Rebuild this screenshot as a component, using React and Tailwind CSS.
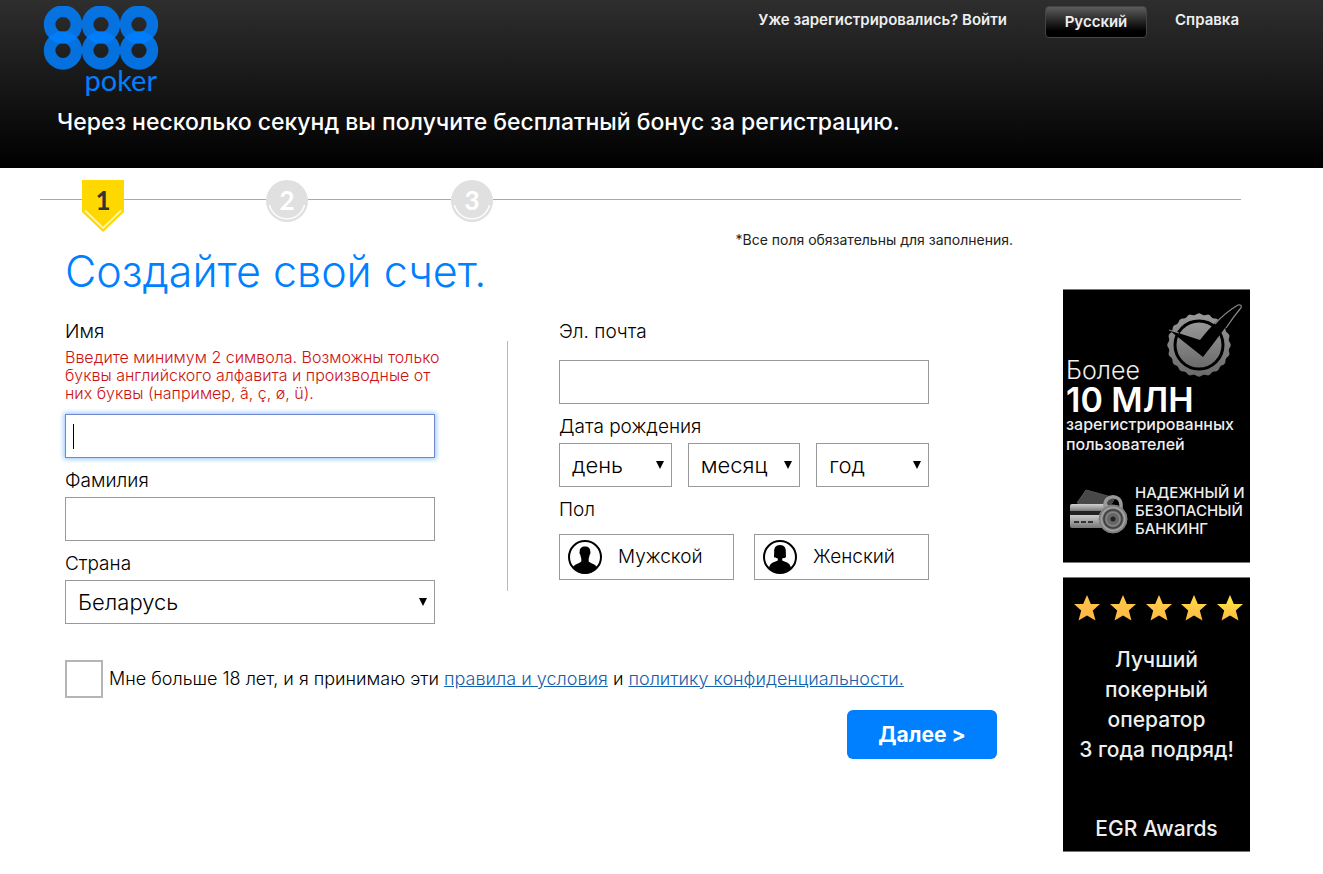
import React, { useState } from 'react'
import cn from 'clsx'

const Logo = () => (
  <a href="#" aria-label="888 poker" className="flex flex-col w-[116px] text-[#007fff]">
    <svg viewBox="0 0 116 64" className="block w-[116px] h-16" aria-hidden="true">
      {[20, 58, 96].map((x) => (
        <g key={x} fill="none" stroke="#007fff" strokeOpacity="0.86" strokeWidth="11.6">
          <circle cx={x} cy="18.5" r="13.4" />
          <circle cx={x} cy="44.5" r="13.4" />
        </g>
      ))}
    </svg>
    <span className="self-end pr-[2px] font-['Lato'] text-[29px] leading-5 font-normal">poker</span>
  </a>
)

const Header = () => (
  <header className="h-[168px] bg-linear-to-b/srgb from-[#2e2e2e] to-black text-white">
    <div className="flex flex-col max-w-[1250px] pl-[43px] pr-[11px] pt-[6px]">
      <div className="flex items-start justify-between">
        <Logo />
        <nav className="flex items-start text-[15px] leading-7 font-semibold text-[#eee]">
          <a href="#" className="mr-[38px]">Уже зарегистрировались? Войти</a>
          <button
            type="button"
            className="w-[102px] h-8 mr-7 rounded-sm border border-[#444] bg-linear-to-b/srgb from-[#5c5c5c] to-black to-80%"
          >
            Русский
          </button>
          <a href="#">Справка</a>
        </nav>
      </div>
      <p className="mt-4 ml-[14px] text-[23px] leading-8 font-medium">
        Через несколько секунд вы получите бесплатный бонус за регистрацию.
      </p>
    </div>
  </header>
)

const StepCircle = ({ children }) => (
  <li className="relative flex items-center justify-center size-[42px] rounded-full bg-[#e0e0e0] pb-[2px] font-['Lato'] text-[26px] font-bold text-white">
    <svg viewBox="0 0 42 42" className="absolute inset-0" fill="none" aria-hidden="true">
      <path d="M3.5 25 A18 18 0 0 0 38.500 25" stroke="#fff" strokeWidth="1.3" />
    </svg>
    {children}
  </li>
)

const Steps = () => (
  <ol className="flex items-start max-w-[1241px] h-16 pt-3 pl-10">
    <li role="presentation" className="w-[42px] h-px mt-[19px] bg-[#aaa]" />
    <li className="relative w-[42px] h-[52px] text-center font-['Lato'] text-[26px] leading-10 font-bold text-[#333]">
      <svg viewBox="0 0 42 52" className="absolute inset-0" aria-hidden="true">
        <path d="M0 0H42V32L21 52L0 32Z" fill="#ffd800" />
        <path d="M3 30.500L21 48L39 30.500" fill="none" stroke="#fff3b0" strokeWidth="1.8" />
      </svg>
      <span className="relative">1</span>
    </li>
    <li role="presentation" className="w-[142px] h-px mt-[19px] bg-[#aaa]" />
    <StepCircle>2</StepCircle>
    <li role="presentation" className="w-[143px] h-px mt-[19px] bg-[#aaa]" />
    <StepCircle>3</StepCircle>
    <li role="presentation" className="flex-1 h-px mt-[19px] bg-[#aaa]" />
  </ol>
)

const Label = ({ className, ...props }) => (
  <label className={cn('block text-[19px] leading-[26px]', className)} {...props} />
)

const TextInput = ({ className, ...props }) => (
  <input
    className={cn('block w-full h-11 px-2 border bg-white text-[22px] outline-none', className || 'border-[#999]')}
    {...props}
  />
)

const Select = ({ children, ...props }) => (
  <div className="relative">
    <select
      className="block w-full h-11 pl-3 pr-6 appearance-none border border-[#999] bg-white text-[22px] outline-none"
      {...props}
    >
      {children}
    </select>
    <svg viewBox="0 0 8 8" className="absolute right-2 top-[18px] size-2 pointer-events-none" aria-hidden="true">
      <path d="M0 0H8L4 8Z" />
    </svg>
  </div>
)

const MaleIcon = () => (
  <svg viewBox="0 0 34 34" className="size-[34px]" aria-hidden="true">
    <circle cx="17" cy="17" r="16" fill="#fff" stroke="#000" strokeWidth="2" />
    <path d="M17 6.500C13.500 6.500 11.600 8.500 11.700 11.500C11.300 12 11.600 14.500 12.400 15C12.700 17 13 18 13.300 18.500V21.500C10.500 24 7 24 5 27C8.500 32 13 33.500 17 33.500C21 33.500 25.500 32 29 27C27 24 23.500 24 20.700 21.500V18.500C21 18 21.300 17 21.600 15C22.400 14.500 22.700 12 22.300 11.500C22.400 8.500 20.500 6.500 17 6.500Z" />
  </svg>
)

const FemaleIcon = () => (
  <svg viewBox="0 0 34 34" className="size-[34px]" aria-hidden="true">
    <circle cx="17" cy="17" r="16" fill="#fff" stroke="#000" strokeWidth="2" />
    <path d="M17 5C12.500 5 11 8 11.200 12C11.300 15 10.500 16.500 11.500 17.500C12.500 18.300 14 18 14.800 18.500V20.500C12 22 7.500 22 6 27.500C9 32 13 33 17 33C21 33 25 32 28 27.500C26.500 22 22 22 19.200 20.500V18.500C20 18 21.500 18.300 22.500 17.500C23.500 16.500 22.700 15 22.800 12C23 8 21.500 5 17 5Z" />
  </svg>
)

const GenderOption = ({ value, icon, children }) => (
  <label className="flex items-center h-[46px] px-2 gap-4 border border-[#999] cursor-pointer text-[19px] has-checked:bg-[#e6f2ff]">
    <input type="radio" name="gender" value={value} className="sr-only" />
    {icon}
    {children}
  </label>
)

const SealIcon = () => {
  // scalloped edge of the seal
  const edge = Array.from({ length: 192 }, (_, i) => {
    const a = (i / 192) * Math.PI * 2
    const r = 31 + 0.8 * Math.cos(a * 20)
    return `${(34 + r * Math.cos(a)).toFixed(1)},${(41 + r * Math.sin(a)).toFixed(1)}`
  }).join(' ')

  return (
    <svg viewBox="0 0 78 78" className="size-[78px]" aria-hidden="true">
      <defs>
        <linearGradient id="seal" x1="0" y1="0" x2="0" y2="1">
          <stop offset="0" stopColor="#999" />
          <stop offset="1" stopColor="#6a6a6a" />
        </linearGradient>
      </defs>
      <polygon points={edge} fill="url(#seal)" />
      <circle cx="34" cy="41" r="24" fill="url(#seal)" stroke="#000" strokeWidth="3" />
      <path d="M4 26L35 36C46 22 60 8 73 1C77 0 77 3 75 5C62 20 51 37 38 53Z" fill="#000" />
      <path d="M50 20C58 11 66 5 73 1C77 0 77 3 75 5C70 11 65 18 61 24M4 26L14 29" fill="none" stroke="#888" strokeWidth="1.2" />
    </svg>
  )
}

const BankingIcon = () => (
  <svg viewBox="0 0 60 46" className="w-[60px] h-[46px] shrink-0" aria-hidden="true">
    <defs>
      <linearGradient id="card" x1="0" y1="0" x2="0" y2="1">
        <stop offset="0" stopColor="#d0d0d0" />
        <stop offset="0.3" stopColor="#777" />
        <stop offset="0.31" stopColor="#222" />
        <stop offset="0.45" stopColor="#222" />
        <stop offset="0.46" stopColor="#ccc" />
        <stop offset="1" stopColor="#777" />
      </linearGradient>
      <radialGradient id="lock">
        <stop offset="0" stopColor="#444" />
        <stop offset="0.5" stopColor="#888" />
        <stop offset="0.65" stopColor="#333" />
        <stop offset="0.8" stopColor="#aaa" />
        <stop offset="1" stopColor="#666" />
      </radialGradient>
    </defs>
    <path d="M8 15L17 2L46 10L40 20Z" fill="#484848" stroke="#555" />
    <rect x="1" y="16" width="38" height="24" rx="2" fill="url(#card)" />
    <path d="M5 34H10M12 34H17M19 34H24" stroke="#333" strokeWidth="2" />
    <path d="M36 26V17C36 6 52 6 52 17V26" fill="none" stroke="#999" strokeWidth="3.500" />
    <circle cx="44" cy="31" r="14" fill="url(#lock)" stroke="#888" />
    <circle cx="44" cy="31" r="6" fill="#666" />
    <circle cx="44" cy="31" r="2.500" fill="#222" />
  </svg>
)

const stars = ['#ffc34a', '#ffc94a', '#ffd24a', '#ffde45', '#ffec3f']

const Promo = () => (
  <aside className="flex flex-col gap-[14px] w-[187px] shrink-0 mt-[57px] text-[#eee]">
    <section className="flex flex-col h-[274px] px-[3px] pt-[14px] bg-black border-y border-[#777]">
      <div className="flex justify-end pr-1">
        <SealIcon />
      </div>
      <p className="-mt-[26px] text-[25px] leading-7 font-light">Более</p>
      <p className="text-[34px] leading-8 font-semibold text-white">10 МЛН</p>
      <p className="text-[16px] leading-5 font-medium whitespace-nowrap -mt-[2px]">
        зарегистрированных
        <br />
        пользователей
      </p>
      <div className="flex items-center gap-[6px] mt-[30px] pl-[3px]">
        <BankingIcon />
        <p className="text-[15px] leading-[18px] font-medium whitespace-nowrap">
          НАДЕЖНЫЙ И
          <br />
          БЕЗОПАСНЫЙ
          <br />
          БАНКИНГ
        </p>
      </div>
    </section>
    <section className="flex flex-col h-[275px] pt-4 bg-black border-y border-[#777] text-[21px] leading-[30px] font-medium text-center">
      <div className="flex justify-between pl-[10px] pr-[6px]">
        {stars.map((color, index) => (
          <svg key={color} viewBox="0 0 28 28" className="size-7" aria-hidden="true">
            <linearGradient id={`star${index}`} x1="0" y1="0" x2="0" y2="1">
              <stop offset="0" stopColor={color} />
              <stop offset="1" stopColor="#ffb845" />
            </linearGradient>
            <path d="M14 1L17.800 10H27L19.800 16.400L22.500 26.500L14 21.500L5.500 26.500L8.200 16.400L1 10H10.200Z" fill={`url(#star${index})`} />
          </svg>
        ))}
      </div>
      <p className="mt-[23px]">
        Лучший
        <br />
        покерный
        <br />
        оператор
        <br />
        3 года подряд!
      </p>
      <p className="mt-[49px]">EGR Awards</p>
    </section>
  </aside>
)

const SignupForm = () => {
  const [accepted, setAccepted] = useState(false)

  return (
    <form className="flex-1 min-w-0 pl-[65px]" onSubmit={(e) => e.preventDefault()}>
      <p className="pr-[50px] text-right text-[14px] leading-4 font-normal text-[#222]">*Все поля обязательны для заполнения.</p>
      <h1 className="text-[43px] leading-[46px] font-light text-[#007fff]">Создайте свой счет.</h1>

      <div className="flex mt-[25px]">
        <div className="w-[370px]">
          <Label htmlFor="firstName">Имя</Label>
          <p className="mt-[3px] mb-3 text-[16px] leading-[18px] text-[#cc1212] whitespace-nowrap">
            Введите минимум 2 символа. Возможны только
            <br />
            буквы английского алфавита и производные от
            <br />
            них буквы (например, ã, ç, ø, ü).
          </p>
          <div className="relative group">
            <TextInput
              id="firstName"
              type="text"
              className="border-[#7286cf] shadow-[0_0_5px_1px_#8cc4ff]"
            />
            <span className="absolute left-2 top-[10px] w-px h-[25px] bg-black group-focus-within:hidden" />
          </div>
          <Label htmlFor="lastName" className="mt-[10px] mb-[3px]">Фамилия</Label>
          <TextInput id="lastName" type="text" />
          <Label htmlFor="country" className="mt-[10px] mb-[3px]">Страна</Label>
          <Select id="country">
            <option>Беларусь</option>
          </Select>
        </div>

        <div className="w-px h-[250px] mt-[22px] ml-[72px] mr-[51px] bg-[#bbb]" />

        <div className="w-[370px]">
          <Label htmlFor="email">Эл. почта</Label>
          <div className="mt-[15px]">
            <TextInput id="email" type="email" />
          </div>
          <Label htmlFor="day" className="mt-[10px] mb-[3px]">Дата рождения</Label>
          <div className="grid grid-cols-3 gap-4">
            <Select id="day">
              <option>день</option>
            </Select>
            <Select aria-label="Месяц рождения">
              <option>месяц</option>
            </Select>
            <Select aria-label="Год рождения">
              <option>год</option>
            </Select>
          </div>
          <fieldset className="mt-[10px]">
            <legend className="mb-[11px] text-[19px] leading-[26px]">Пол</legend>
            <div className="grid grid-cols-2 gap-5">
              <GenderOption value="male" icon={<MaleIcon />}>Мужской</GenderOption>
              <GenderOption value="female" icon={<FemaleIcon />}>Женский</GenderOption>
            </div>
          </fieldset>
        </div>
      </div>

      <div className="flex items-center gap-[6px] mt-9">
        <input
          id="terms"
          type="checkbox"
          checked={accepted}
          onChange={() => setAccepted(!accepted)}
          className="size-[38px] shrink-0 appearance-none border-2 border-[#b5b5b5] bg-white checked:bg-[#007fff]"
        />
        <label htmlFor="terms" className="text-[18px] leading-6 whitespace-nowrap">
          Мне больше 18 лет, и я принимаю эти{' '}
          <a href="#" className="text-[#1560ad] underline">правила и условия</a> и{' '}
          <a href="#" className="text-[#1560ad] underline">политику конфиденциальности.</a>
        </label>
      </div>

      <div className="flex justify-end mt-3 pr-[66px]">
        <button type="submit" className="w-[150px] h-[49px] rounded-md bg-[#007fff] text-[21px] font-bold text-white">
          Далее &gt;
        </button>
      </div>
    </form>
  )
}

const App = () => (
  <div className="min-h-screen bg-white font-['Inter',sans-serif] font-light text-black">
    <Header />
    <Steps />
    <main className="flex items-start max-w-[1250px]">
      <SignupForm />
      <Promo />
    </main>
  </div>
)

export default App
